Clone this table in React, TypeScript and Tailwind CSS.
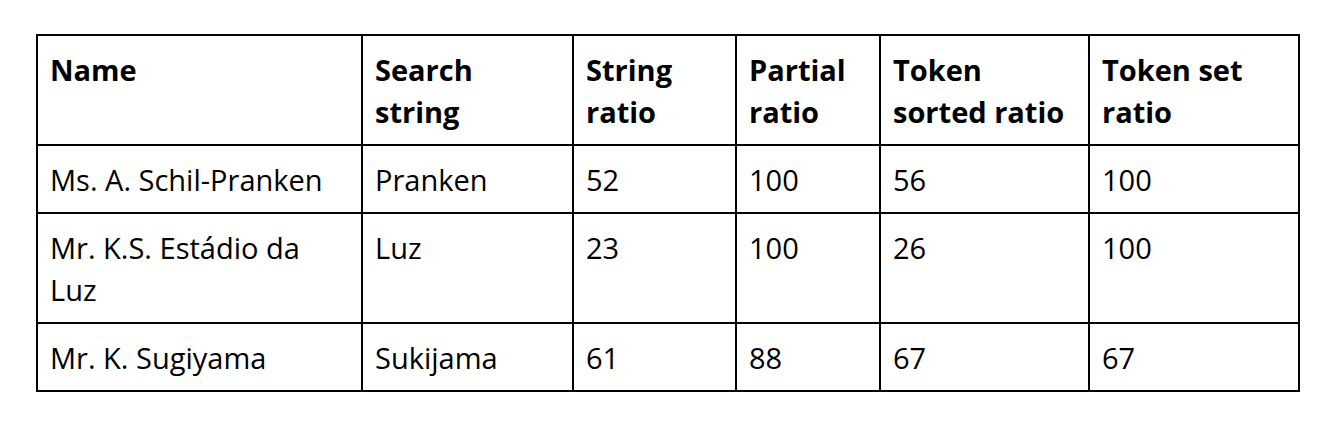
const rows = [
  ["Ms. A. Schil-Pranken", "Pranken", "52", "100", "56", "100"],
  ["Mr. K.S. Estádio da Luz", "Luz", "23", "100", "26", "100"],
  ["Mr. K. Sugiyama", "Sukijama", "61", "88", "67", "67"],
];

const headers = ["Name", "Search string", "String ratio", "Partial ratio", "Token sorted ratio", "Token set ratio"];

function App() {
  return (
    <div className="min-h-screen bg-white pt-[34px] pl-[36px] font-['Open_Sans',sans-serif] text-[29px] leading-[42px] text-black">
      <table className="table-fixed border-collapse w-[1262px]">
        <colgroup>
          <col className="w-[325px]" />
          <col className="w-[211px]" />
          <col className="w-[163px]" />
          <col className="w-[144px]" />
          <col className="w-[209px]" />
          <col className="w-[210px]" />
        </colgroup>
        <thead>
          <tr>
            {headers.map((h) => (
              <th key={h} className="border-2 border-black px-3 pt-[13px] pb-[11px] text-left align-top font-bold">
                {h}
              </th>
            ))}
          </tr>
        </thead>
        <tbody>
          {rows.map((r) => (
            <tr key={r[0]}>
              {r.map((c, i) => (
                <td key={i} className="border-2 border-black px-3 pt-[13px] pb-[11px] text-left align-top">
                  {c}
                </td>
              ))}
            </tr>
          ))}
        </tbody>
      </table>
    </div>
  );
}

export default App;
